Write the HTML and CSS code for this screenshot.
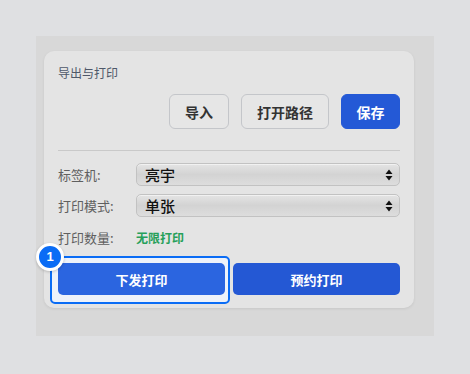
FILE: index.html
```html
<!DOCTYPE html>
<html lang="zh-CN">
<head>
    <meta charset="UTF-8">
    <title>导出与打印</title>
    <link rel="stylesheet" href="styles.css">
</head>
<body>

    <div class="frame">
        <div class="card">
            <div class="title">导出与打印</div>

            <div class="actions">
                <button class="btn import">导入</button>
                <button class="btn open">打开路径</button>
                <button class="btn primary">保存</button>
            </div>

            <div class="divider"></div>

            <div class="row">
                <span class="label">标签机:</span>
                <div class="select">
                    <span>亮宇</span>
                    <svg class="arrows" width="8" height="12" viewBox="0 0 8 12"><path d="M4 0.5 L7.5 5 H0.5 Z M4 11.5 L7.5 7 H0.5 Z" fill="#111"/></svg>
                </div>
            </div>
            <div class="row">
                <span class="label">打印模式:</span>
                <div class="select">
                    <span>单张</span>
                    <svg class="arrows" width="8" height="12" viewBox="0 0 8 12"><path d="M4 0.5 L7.5 5 H0.5 Z M4 11.5 L7.5 7 H0.5 Z" fill="#111"/></svg>
                </div>
            </div>
            <div class="row count">
                <span class="label">打印数量:</span>
                <span class="unlimited">无限打印</span>
            </div>

            <div class="print-row">
                <div class="focus-wrap">
                    <span class="step">1</span>
                    <button class="btn print">下发打印</button>
                </div>
                <button class="btn print dark">预约打印</button>
            </div>
        </div>
    </div>

</body>
</html>
```

FILE: styles.css
```css
body {
    margin: 0;
    background: #dfe0e2;
    font-family: "Noto Sans CJK SC", "Noto Sans", sans-serif;
}
.frame {
    margin: 36px 0 0 36px;
    width: 398px;
    height: 300px;
    box-sizing: border-box;
    padding: 15px 20px 0 8px;
    background: #d8d8d8;
}
.card {
    width: 370px;
    height: 257px;
    box-sizing: border-box;
    padding: 14px 14px 0 14px;
    background: #e4e4e4;
    border-radius: 10px;
    box-shadow: 0 1px 3px rgba(0, 0, 0, 0.08);
}
.title {
    font-size: 12px;
    line-height: 16px;
    color: #4f5869;
}
.actions {
    display: flex;
    justify-content: flex-end;
    gap: 12px;
    margin-top: 13px;
}
.btn {
    font-family: inherit;
    font-size: 14px;
    font-weight: bold;
    height: 35px;
    padding: 0;
    border: 1px solid #c4c6ca;
    border-radius: 6px;
    background: #e6e6e6;
    color: #333;
    cursor: pointer;
}
.btn.import {
    width: 60px;
}
.btn.open {
    width: 88px;
}
.btn.primary {
    background: #2459d6;
    border-color: #2459d6;
    color: #fff;
    width: 59px;
}
.divider {
    height: 1px;
    background: #c9c9c9;
    margin-top: 21px;
}
.row {
    display: flex;
    align-items: center;
    height: 23px;
    margin-top: 8px;
}
.divider + .row {
    margin-top: 12px;
}
.label {
    width: 78px;
    font-size: 13px;
    color: #5f5f5f;
}
.select {
    flex: 1;
    height: 23px;
    box-sizing: border-box;
    display: flex;
    align-items: center;
    justify-content: space-between;
    padding: 0 6px 0 8px;
    border: 1px solid #c2c2c2;
    border-radius: 5px;
    background: linear-gradient(#e4e4e4, #d3d3d3 50%, #dddddd);
    box-shadow: inset 0 1px 0 rgba(255, 255, 255, 0.5);
    font-size: 15px;
    font-weight: 500;
    color: #111;
}
.row.count {
    height: 20px;
    margin-top: 10px;
}
.unlimited {
    font-size: 12px;
    font-weight: bold;
    color: #27a05a;
}
.print-row {
    display: flex;
    gap: 8px;
    margin-top: 16px;
}
.focus-wrap {
    position: relative;
    flex: 1 1 0;
    min-width: 0;
    display: flex;
}
.focus-wrap::before {
    content: "";
    position: absolute;
    left: -8px;
    top: -7px;
    right: -5px;
    bottom: -9px;
    border: 2px solid #0a6cf5;
    border-radius: 5px;
    background: #eef2fa;
}
.btn.print {
    position: relative;
    flex: 1 1 0;
    min-width: 0;
    height: 32px;
    font-size: 13px;
    border: none;
    border-radius: 5px;
    background: #2b65e0;
    color: #fff;
}
.btn.print.dark {
    background: #2458d4;
}
.step {
    position: absolute;
    left: -22px;
    top: -20px;
    z-index: 2;
    width: 22px;
    height: 22px;
    border: 3px solid #fff;
    border-radius: 50%;
    background: #0a6cf5;
    color: #fff;
    font-family: "Liberation Sans", sans-serif;
    font-size: 13px;
    font-weight: bold;
    line-height: 22px;
    text-align: center;
    box-shadow: 0 1px 3px rgba(0, 0, 0, 0.2);
}
```
